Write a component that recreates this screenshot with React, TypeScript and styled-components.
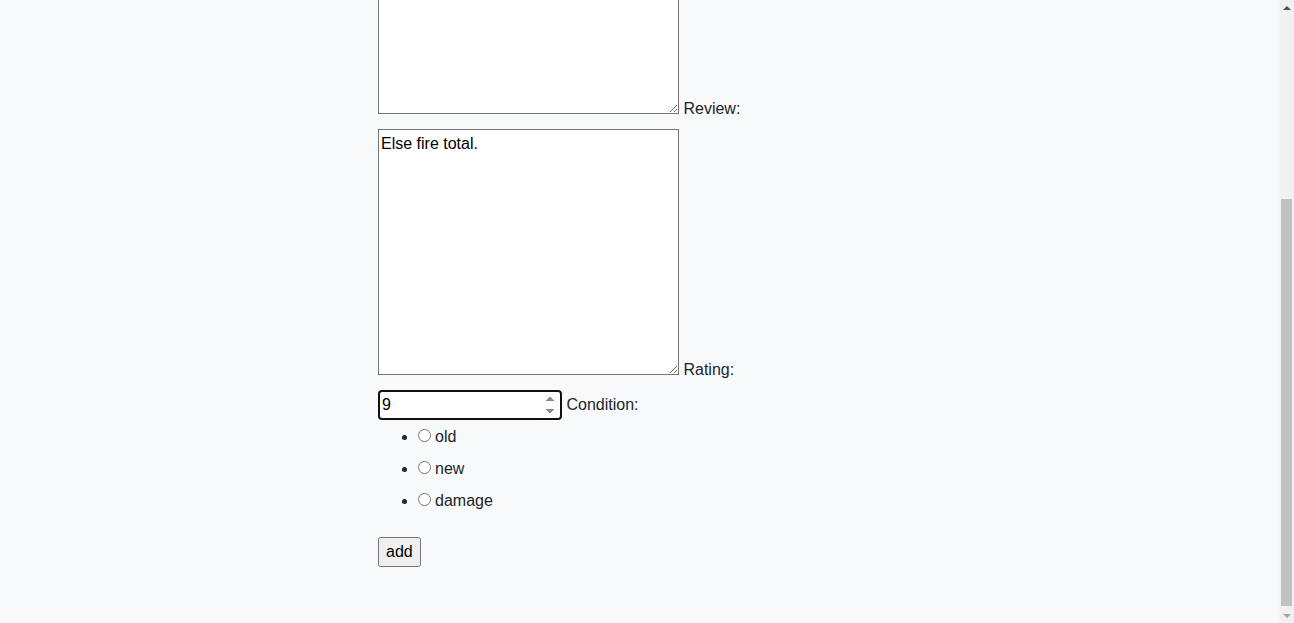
import React from "react";
import styled, { createGlobalStyle } from "styled-components";

const GlobalStyle = createGlobalStyle`
  html, body {
    margin: 0;
    padding: 0;
    overflow: hidden;
  }
  body {
    background: #f8f9fa;
    color: #212529;
    font-family: "Liberation Sans", Arial, sans-serif;
    font-size: 16px;
    line-height: 1.5;
  }
`;

const Viewport = styled.div`
  display: flex;
  height: 100vh;
  overflow: hidden;
`;

const Main = styled.main`
  flex: 1;
  min-width: 0;
  display: flex;
  flex-direction: column;
  justify-content: flex-end;
  overflow: hidden;
`;

const Form = styled.form`
  flex-shrink: 0;
  align-self: center;
  width: 523px;
  padding-bottom: 56px;
`;

const Label = styled.label`
  display: inline-block;
  margin-bottom: 8px;
`;

const TextArea = styled.textarea`
  margin: 0;
  width: 295px;
  height: 240px;
  padding: 2px;
  border: 1px solid #767676;
  background: #ffffff;
  color: #000000;
  font: inherit;
  line-height: inherit;
  overflow: auto;
  resize: vertical;
`;

const NumberInput = styled.input`
  margin: 0;
  box-sizing: border-box;
  width: 184px;
  padding: 1px 2px;
  border: 2px solid #101010;
  border-radius: 4px;
  outline: none;
  background: #ffffff;
  color: #000000;
  font: inherit;
  line-height: inherit;

  &:focus,
  &:focus-visible {
    outline: none;
  }

  &::-webkit-inner-spin-button {
    opacity: 1;
  }
`;

const RadioList = styled.ul`
  margin: 0 0 16px;
  padding-left: 40px;
`;

const RadioItem = styled.li`
  list-style: disc;
`;

const Radio = styled.input`
  margin: 3px 4px 0 0;
  padding: 0;
`;

const AddButton = styled.button`
  margin: 0;
  font: inherit;
  line-height: inherit;
`;

const Scrollbar = styled.div`
  flex: 0 0 15px;
  display: flex;
  flex-direction: column;
  background: #f1f1f1;
`;

const ScrollArrow = styled.div<{ $muted?: boolean }>`
  flex: 0 0 15px;
  display: flex;
  align-items: center;
  justify-content: center;
  color: ${(p) => (p.$muted ? "#a3a3a3" : "#505050")};
`;

const Track = styled.div`
  flex: 1;
  display: flex;
  flex-direction: column;
  padding: 0 2px 2px;
`;

const Thumb = styled.div`
  margin-top: auto;
  height: 407px;
  background: #c1c1c1;
`;

const conditions = ["old", "new", "damage"];

function Triangle({ down }: { down?: boolean }) {
  return (
    <svg width="8" height="4" viewBox="0 0 8 4" aria-hidden="true">
      <polygon
        points={down ? "0,0 8,0 4,4" : "0,4 8,4 4,0"}
        fill="currentColor"
      />
    </svg>
  );
}

export default function App() {
  return (
    <>
      <GlobalStyle />
      <Viewport>
        <Main>
          <Form onSubmit={(e) => e.preventDefault()}>
            <TextArea aria-label="Description" defaultValue="" />{" "}
            <Label>Review:</Label>
            <TextArea defaultValue="Else fire total." />{" "}
            <Label>Rating:</Label>
            <NumberInput type="number" defaultValue={9} />{" "}
            <Label>Condition:</Label>
            <RadioList>
              {conditions.map((c) => (
                <RadioItem key={c}>
                  <Label>
                    <Radio type="radio" name="condition" value={c} />
                    {c}
                  </Label>
                </RadioItem>
              ))}
            </RadioList>
            <AddButton type="submit">add</AddButton>
          </Form>
        </Main>
        <Scrollbar aria-hidden="true">
          <ScrollArrow>
            <Triangle />
          </ScrollArrow>
          <Track>
            <Thumb />
          </Track>
          <ScrollArrow $muted>
            <Triangle down />
          </ScrollArrow>
        </Scrollbar>
      </Viewport>
    </>
  );
}
